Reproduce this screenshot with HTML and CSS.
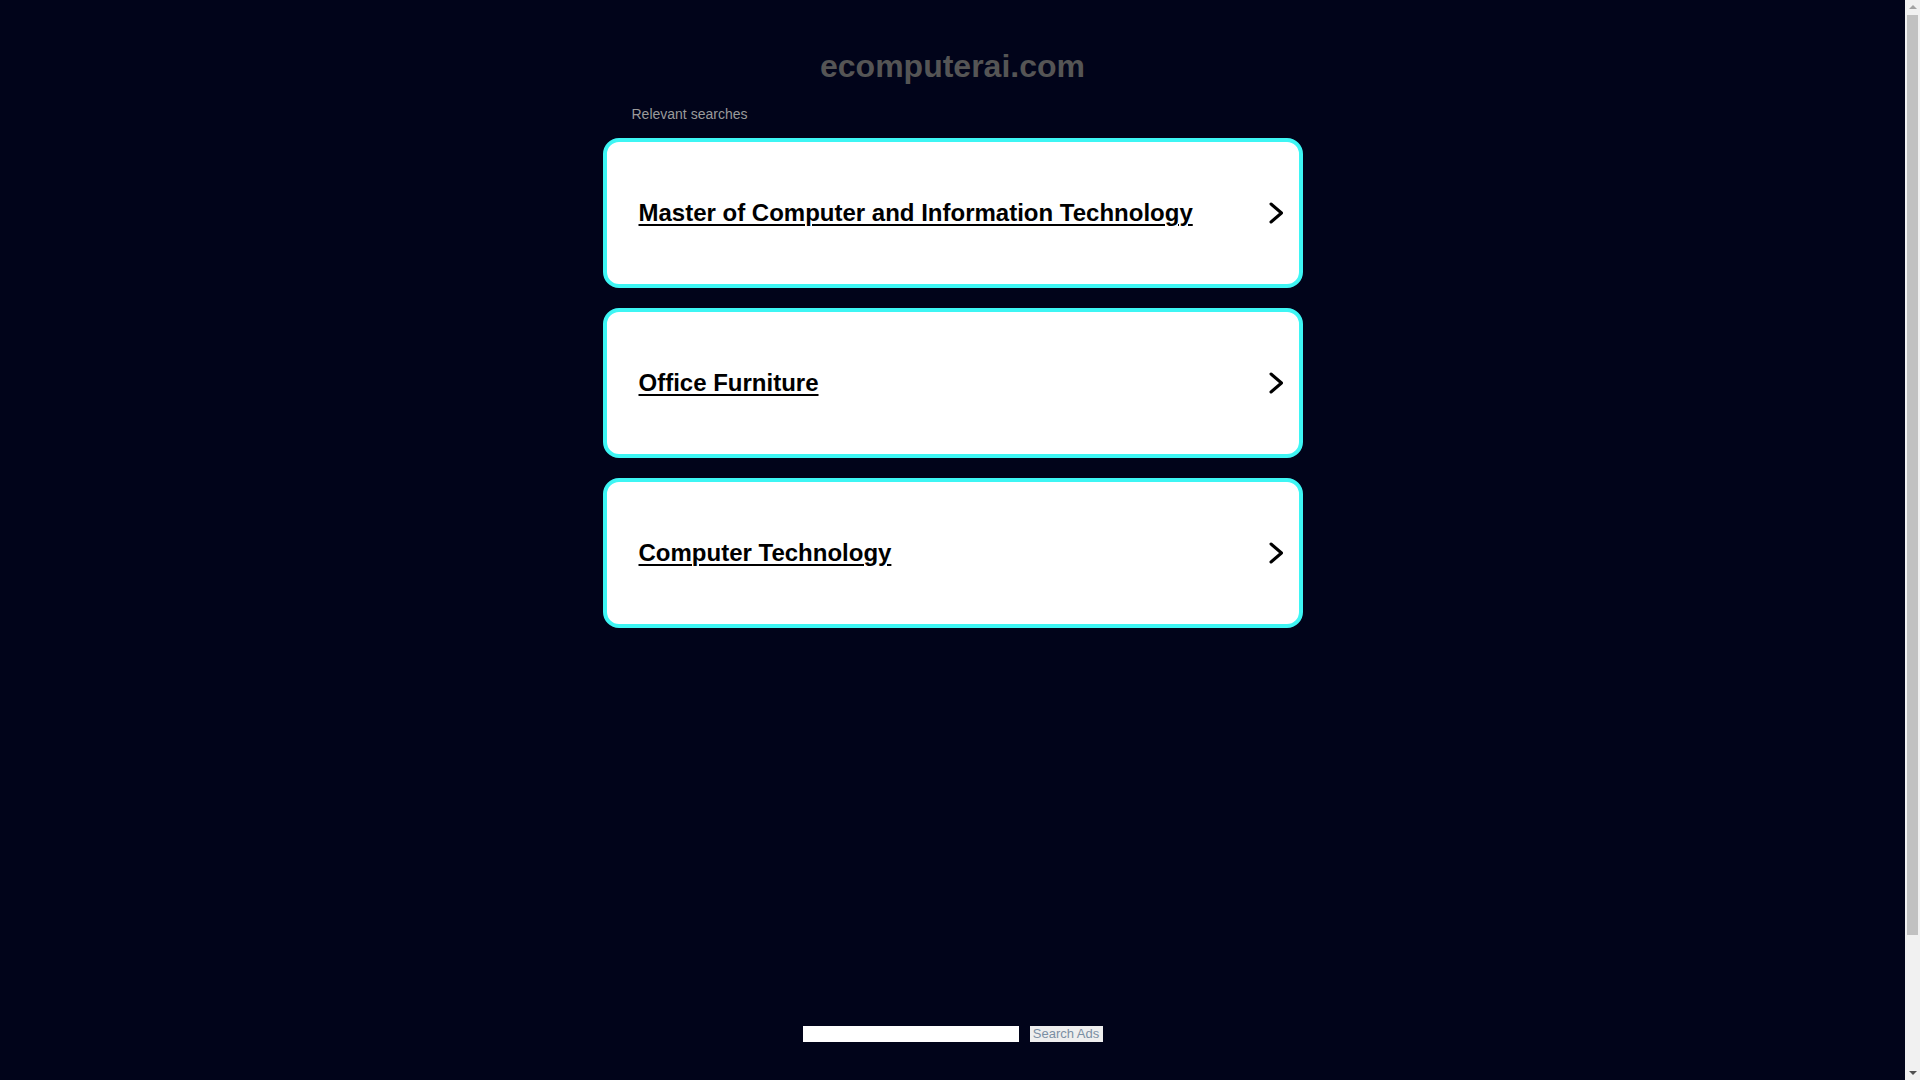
FILE: index.html
```html
<!DOCTYPE html>
<html lang="en">
<head>
<meta charset="utf-8">
<title>ecomputerai.com</title>
<link rel="stylesheet" href="styles.css">
</head>
<body>
<div class="page">
  <h1 class="domain">ecomputerai.com</h1>
  <div class="results">
    <div class="label">Relevant searches</div>
    <a class="card" href="#">
      <span class="card-text">Master of Computer and Information Technology</span>
      <svg class="chev" width="14" height="22" viewBox="0 0 14 22"><polyline points="2,2 12.5,11 2,20" fill="none" stroke="#000" stroke-width="3" stroke-linecap="round" stroke-linejoin="round"/></svg>
    </a>
    <a class="card" href="#">
      <span class="card-text">Office Furniture</span>
      <svg class="chev" width="14" height="22" viewBox="0 0 14 22"><polyline points="2,2 12.5,11 2,20" fill="none" stroke="#000" stroke-width="3" stroke-linecap="round" stroke-linejoin="round"/></svg>
    </a>
    <a class="card" href="#">
      <span class="card-text">Computer Technology</span>
      <svg class="chev" width="14" height="22" viewBox="0 0 14 22"><polyline points="2,2 12.5,11 2,20" fill="none" stroke="#000" stroke-width="3" stroke-linecap="round" stroke-linejoin="round"/></svg>
    </a>
  </div>
  <form class="search" onsubmit="return false;">
    <input class="search-input" type="text" aria-label="Search">
    <button class="search-btn" type="submit">Search Ads</button>
  </form>
  <div class="footer-space"></div>
</div>
<div class="scrollbar" aria-hidden="true">
  <span class="sb-arrow sb-up"></span>
  <span class="sb-thumb"></span>
  <span class="sb-arrow sb-down"></span>
</div>
</body>
</html>
```
FILE: styles.css
```css
html, body {
  margin: 0;
  padding: 0;
  background: #01041a;
}
body {
  font-family: "Liberation Sans", Arial, sans-serif;
}
.page {
  display: flex;
  flex-direction: column;
  align-items: center;
  padding-right: 15px;
}
.domain {
  margin: 48px 0 0;
  font-size: 32px;
  font-weight: bold;
  color: #555555;
  line-height: 37px;
  text-align: center;
}
.results {
  width: 700px;
  margin-top: 21px;
  display: flex;
  flex-direction: column;
  gap: 20px;
}
.label {
  padding-left: 29px;
  font-size: 14px;
  line-height: 16px;
  color: #9a9a9a;
  margin-bottom: -4px;
}
.card {
  display: flex;
  align-items: center;
  box-sizing: border-box;
  height: 150px;
  padding: 0 16px 0 32px;
  background: #ffffff;
  border: 4px solid #3ef6f4;
  border-radius: 16px;
  text-decoration: none;
  color: #000;
}
.card-text {
  flex: 1;
  font-size: 24px;
  font-weight: bold;
  color: #000;
  text-decoration: underline;
  text-decoration-thickness: 2px;
  text-underline-offset: 3px;
}
.chev {
  display: block;
  flex: none;
}
.search {
  display: flex;
  gap: 11px;
  margin-top: 398px;
}
.search-input {
  box-sizing: border-box;
  width: 216px;
  height: 16px;
  border: none;
  padding: 0;
  background: #fff;
}
.search-btn {
  box-sizing: border-box;
  width: 73px;
  height: 16px;
  border: none;
  padding: 0;
  background: #eeeeee;
  color: #7b8fa3;
  font-family: "Liberation Sans", Arial, sans-serif;
  font-size: 13px;
  line-height: 16px;
}
.footer-space {
  height: 190px;
}
.scrollbar {
  position: fixed;
  top: 0;
  right: 0;
  width: 15px;
  height: 100vh;
  background: #f1f1f1;
  display: flex;
  flex-direction: column;
  align-items: center;
}
.sb-arrow {
  flex: none;
  width: 0;
  height: 0;
  border-left: 4px solid transparent;
  border-right: 4px solid transparent;
}
.sb-up {
  margin-top: 5px;
  border-bottom: 4px solid #a3a3a3;
}
.sb-down {
  margin-top: auto;
  margin-bottom: 5px;
  border-top: 4px solid #505050;
}
.sb-thumb {
  flex: none;
  width: 11px;
  height: 920px;
  margin-top: 6px;
  background: #c1c1c1;
}
```
